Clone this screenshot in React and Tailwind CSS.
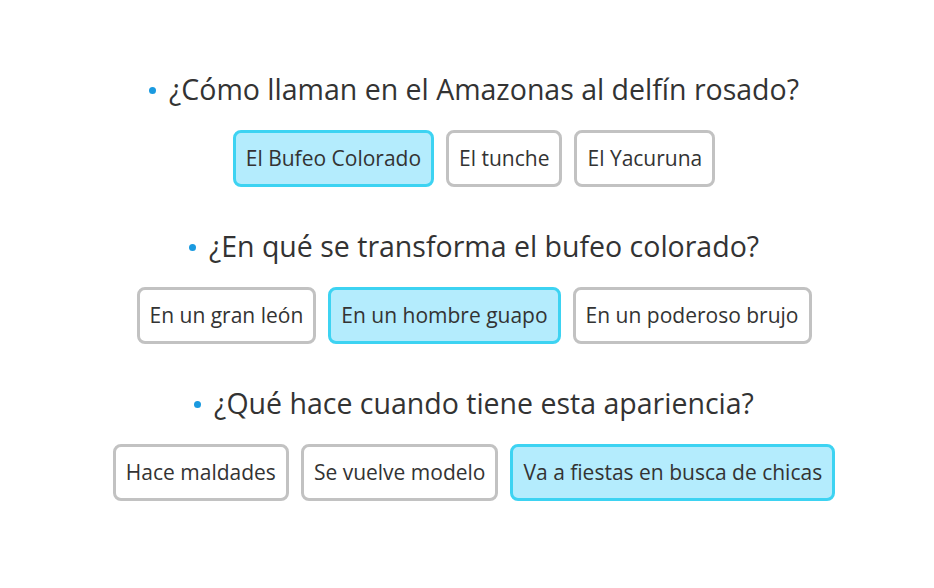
import React from "react";

const questions = [
  {
    q: "¿Cómo llaman en el Amazonas al delfín rosado?",
    options: ["El Bufeo Colorado", "El tunche", "El Yacuruna"],
    selected: 0,
  },
  {
    q: "¿En qué se transforma el bufeo colorado?",
    options: ["En un gran león", "En un hombre guapo", "En un poderoso brujo"],
    selected: 1,
  },
  {
    q: "¿Qué hace cuando tiene esta apariencia?",
    options: ["Hace maldades", "Se vuelve modelo", "Va a fiestas en busca de chicas"],
    selected: 2,
  },
];

export default function App() {
  return (
    <div
      className="w-[934px] h-[588px] bg-white flex flex-col items-center pt-[71px] pl-[14px] text-[#333333]"
      style={{ fontFamily: '"Open Sans", "Noto Sans", sans-serif' }}
    >
      {questions.map((item, i) => (
        <div key={i} className="flex flex-col items-center mb-[41px]">
          <div className="flex items-center h-[36px] text-[28.5px] leading-[36px]">
            <span className="w-[7px] h-[7px] rounded-full bg-[#1a9ae0] mr-[13px] mt-[2px]" />
            <span>{item.q}</span>
          </div>
          <div className="flex gap-[12px] mt-[23px]">
            {item.options.map((opt, j) => (
              <div
                key={j}
                className={
                  "h-[57px] px-[10px] flex items-center rounded-[8px] border-[3px] text-[21px] " +
                  (j === item.selected
                    ? "bg-[#b4ecfd] border-[#3dd3f2]"
                    : "bg-white border-[#c2c2c2]")
                }
              >
                {opt}
              </div>
            ))}
          </div>
        </div>
      ))}
    </div>
  );
}
